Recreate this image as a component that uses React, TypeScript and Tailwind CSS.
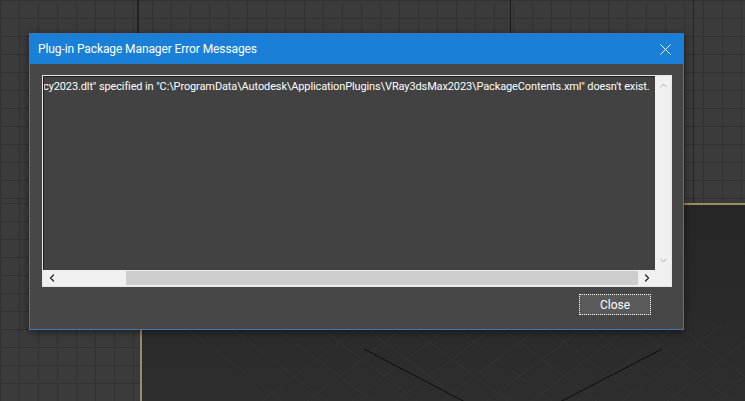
import { X, ChevronUp, ChevronDown, ChevronLeft, ChevronRight } from 'lucide-react';

const font = { fontFamily: 'Roboto, "Noto Sans", sans-serif' };

const Grid = ({ className = '' }: { className?: string }) => (
  <div
    className={`bg-[#3b3b3b] bg-[linear-gradient(to_right,#313131_1px,transparent_1px),linear-gradient(to_bottom,#313131_1px,transparent_1px)] bg-size-[19px_18px] ${className}`}
  />
);

const Perspective = () => (
  <div className="relative flex-1 border-l-2 border-t-2 border-[#9d8c63] bg-[linear-gradient(to_bottom,#262626,#2e2e2e)] overflow-hidden">
    <svg className="absolute inset-0 h-full w-full" viewBox="0 0 603 196" preserveAspectRatio="none">
      {[0, 1, 2, 3, 4, 5, 6, 7, 8, 9, 10, 11].map((i) => (
        <g key={i} stroke="#343434" strokeWidth="1">
          <line x1={120 + i * 45} y1={196} x2={220 + i * 45} y2={120} />
          <line x1={40 + i * 45} y1={120} x2={140 + i * 45} y2={196} />
        </g>
      ))}
      <line x1={222} y1={144} x2={325} y2={198} stroke="#0d0d0d" strokeWidth="1" />
      <line x1={520} y1={144} x2={416} y2={198} stroke="#0d0d0d" strokeWidth="1" />
    </svg>
  </div>
);

export default function App() {
  return (
    <div className="relative h-[401px] w-[745px] overflow-hidden bg-[#2a2a2a]" style={font}>
      {/* viewports */}
      <div className="flex h-full flex-col">
        <div className="relative h-[203px]">
          <Grid className="h-full w-full" />
          <div className="absolute left-[137px] top-0 h-full w-[2px] bg-[#222]" />
          <div className="absolute left-[510px] top-0 h-full w-px bg-[#1a1a1a]" />
          <div className="absolute left-[693px] top-0 h-full w-px bg-[#262626]" />
        </div>
        <div className="flex flex-1">
          <Grid className="w-[140px]" />
          <Perspective />
        </div>
      </div>

      {/* dialog */}
      <div className="absolute left-[29px] top-[33px] flex h-[297px] w-[655px] flex-col border border-[#3f78b3] bg-[#474747] shadow-[0_2px_8px_rgba(0,0,0,0.5)]">
        <div className="flex h-[30px] items-center justify-between bg-[#1a7fd6] pl-[8px] pr-[8px]">
          <span className="text-[12px] tracking-[-0.1px] text-white">Plug-in Package Manager Error Messages</span>
          <X className="h-[19px] w-[19px] text-white" strokeWidth={1.2} />
        </div>

        <div className="flex flex-1 flex-col px-[12px] pt-[11px]">
          <div className="flex h-[212px] w-[630px] flex-col border border-[#e6e6e6] bg-[#f0f0f0]">
            <div className="flex flex-1">
              <div className="flex-1 overflow-hidden border-l border-t border-[#1e1e1e] bg-[#424242] pt-[2px]">
                <div className="ml-[1px] whitespace-nowrap text-[11px] leading-[16px] tracking-[-0.12px] text-white">
                  <span className="ml-[-2px]">cy2023.dlt&quot; specified in &quot;C:\ProgramData\Autodesk\ApplicationPlugins\VRay3dsMax2023\PackageContents.xml&quot; doesn&apos;t exist.</span>
                </div>
              </div>
              <div className="flex w-[16px] flex-col items-center justify-between bg-[#f0f0f0] py-[4px]">
                <ChevronUp className="h-[11px] w-[11px] text-[#a6a6a6]" strokeWidth={2} />
                <ChevronDown className="h-[11px] w-[11px] text-[#a6a6a6]" strokeWidth={2} />
              </div>
            </div>
            <div className="flex h-[16px] items-stretch">
              <div className="flex w-[17px] items-center justify-center">
                <ChevronLeft className="h-[12px] w-[12px] text-[#222]" strokeWidth={2.5} />
              </div>
              <div className="flex flex-1 items-stretch py-[1px]">
                <div className="w-[66px]" />
                <div className="flex-1 bg-[#cdcdcd]" />
              </div>
              <div className="flex w-[17px] items-center justify-center">
                <ChevronRight className="h-[12px] w-[12px] text-[#222]" strokeWidth={2.5} />
              </div>
              <div className="w-[16px]" />
            </div>
          </div>

          <div className="flex justify-end pr-[20px] pt-[7px]">
            <button className="h-[21px] w-[72px] border border-dotted border-white bg-[#5a5a5a] text-[12px] text-white">
              Close
            </button>
          </div>
        </div>
      </div>
    </div>
  );
}
